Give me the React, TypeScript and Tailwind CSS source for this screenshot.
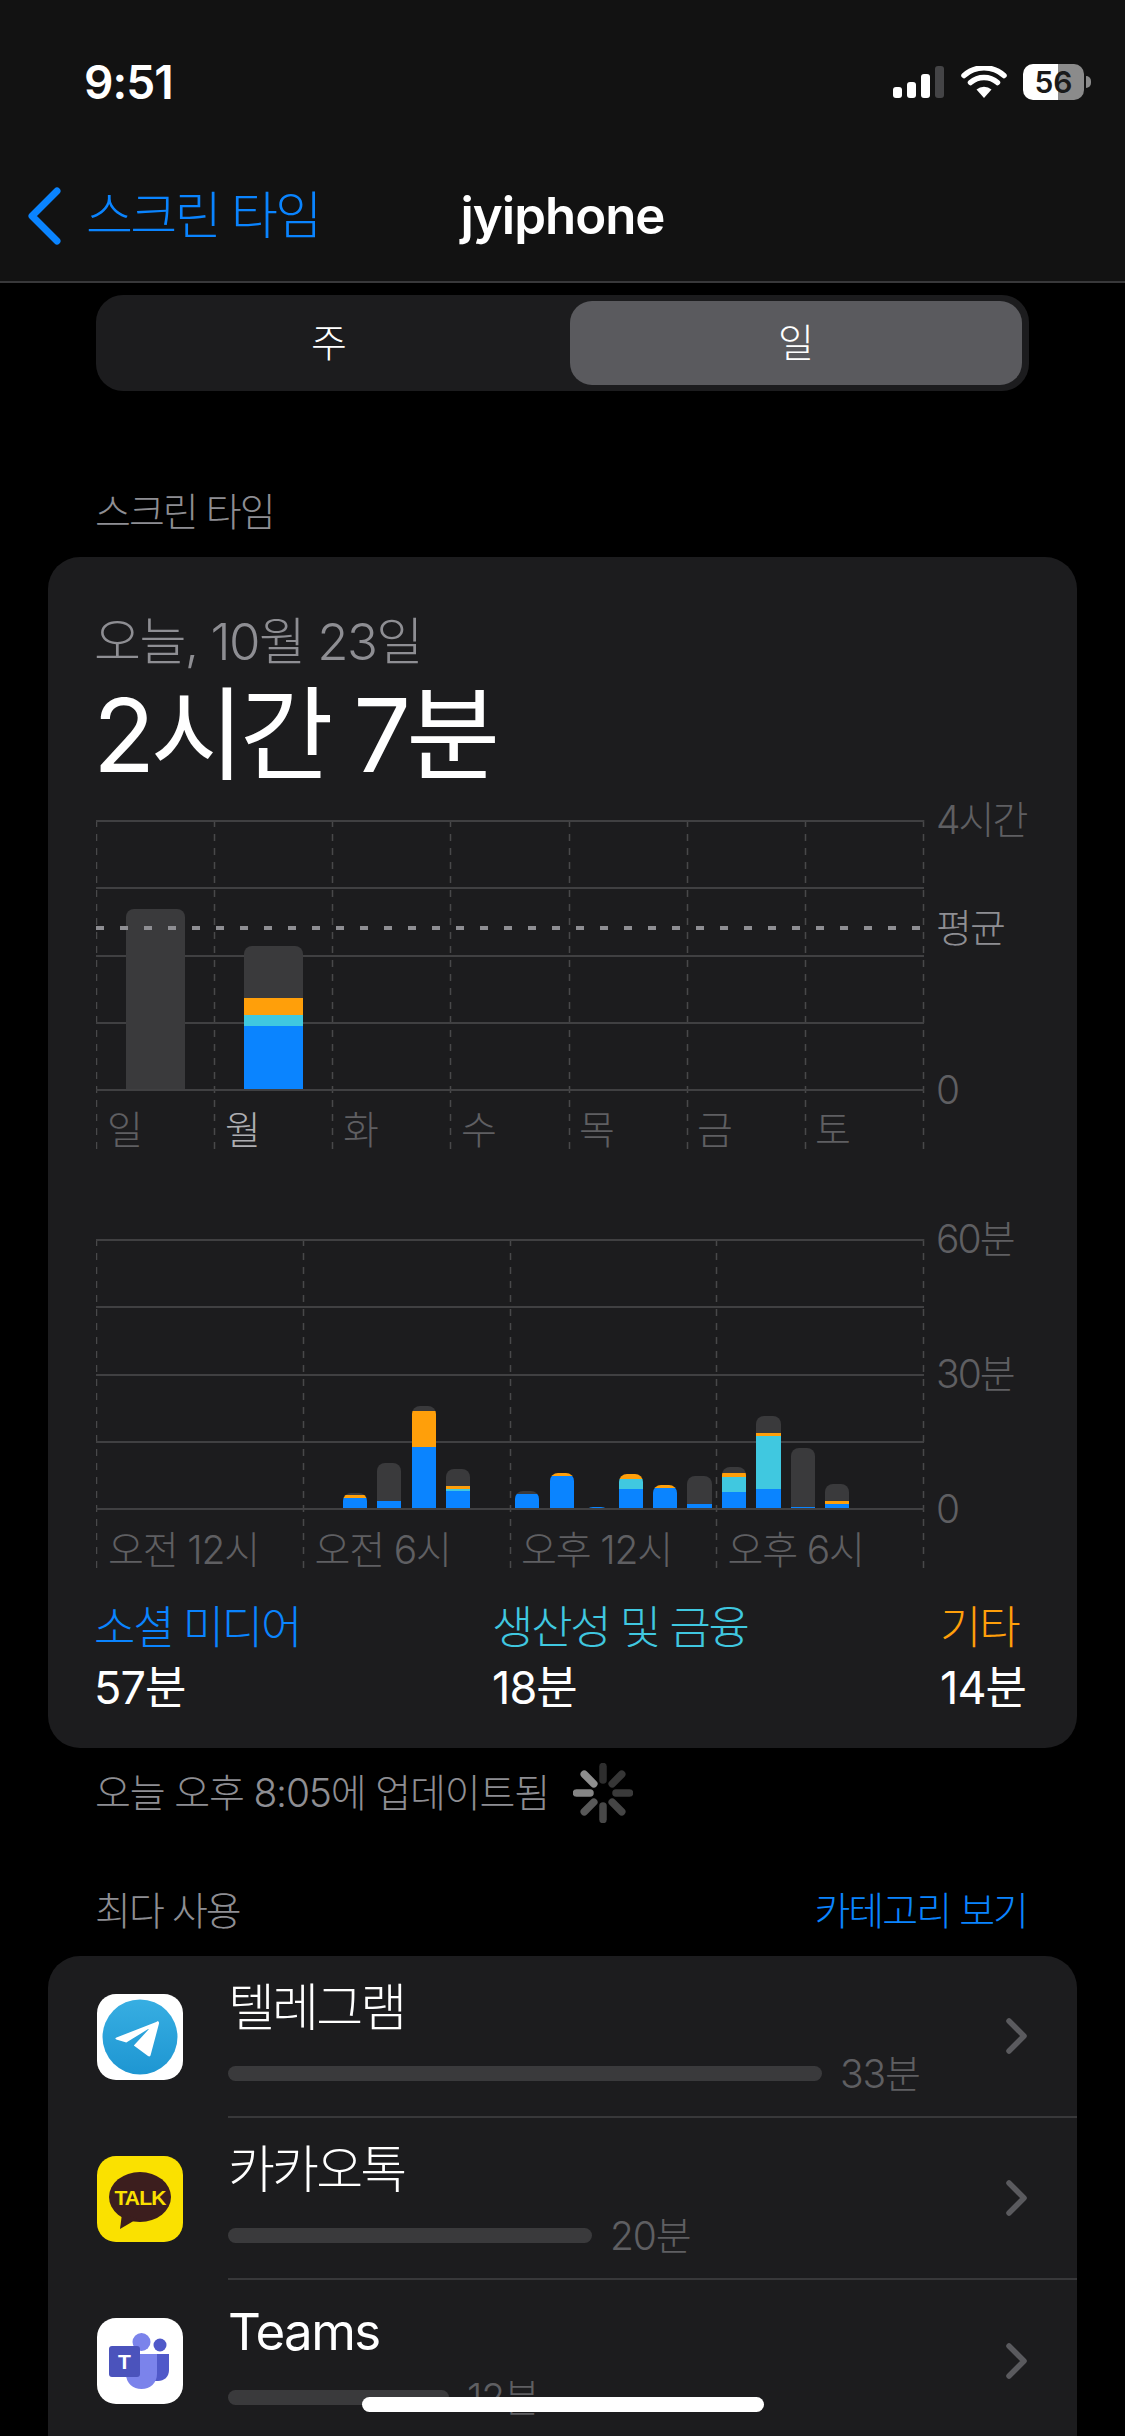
const FONT = "font-['Inter','Noto_Sans_CJK_KR',sans-serif]";

const GRAY = "#3a3a3c";
const BLUE = "#0a84ff";
const CYAN = "#40c8e0";
const ORANGE = "#ff9f0a";
const GRID = "#404042";
const TICK = "#48484a";

type Bar = { x: number; w: number; gray: number; orange: number; cyan: number; blue: number };

const weekBars: Bar[] = [
  { x: 30, w: 59, gray: 181, orange: 0, cyan: 0, blue: 0 },
  { x: 148, w: 59, gray: 52, orange: 17, cyan: 11, blue: 64 },
];

const hourBars: Bar[] = [
  { x: 247, w: 24, gray: 2, orange: 3, cyan: 0, blue: 11 },
  { x: 281, w: 24, gray: 38, orange: 0, cyan: 0, blue: 8 },
  { x: 316, w: 24, gray: 5, orange: 36, cyan: 0, blue: 62 },
  { x: 350, w: 24, gray: 17, orange: 3, cyan: 2, blue: 18 },
  { x: 419, w: 24, gray: 3, orange: 0, cyan: 0, blue: 15 },
  { x: 454, w: 24, gray: 0, orange: 3, cyan: 0, blue: 33 },
  { x: 489, w: 24, gray: 0, orange: 0, cyan: 0, blue: 2 },
  { x: 523, w: 24, gray: 0, orange: 5, cyan: 10, blue: 20 },
  { x: 557, w: 24, gray: 0, orange: 3, cyan: 0, blue: 21 },
  { x: 591, w: 25, gray: 28, orange: 0, cyan: 0, blue: 5 },
  { x: 626, w: 24, gray: 6, orange: 4, cyan: 15, blue: 17 },
  { x: 660, w: 25, gray: 17, orange: 3, cyan: 53, blue: 20 },
  { x: 695, w: 24, gray: 59, orange: 0, cyan: 0, blue: 2 },
  { x: 729, w: 24, gray: 17, orange: 3, cyan: 0, blue: 5 },
];

const BASE = 270;

// stacked bar, the whole stack clipped to one rounded-top shape
function StackedBar({ bar, id }: { bar: Bar; id: string }) {
  const total = bar.gray + bar.orange + bar.cyan + bar.blue;
  let y = BASE - total;
  const segments = [
    { h: bar.gray, fill: GRAY },
    { h: bar.orange, fill: ORANGE },
    { h: bar.cyan, fill: CYAN },
    { h: bar.blue, fill: BLUE },
  ];
  return (
    <g>
      <clipPath id={id}>
        <rect x={bar.x} y={y} width={bar.w} height={total + 12} rx={8} />
      </clipPath>
      <g clipPath={`url(#${id})`}>
        {segments.map((s, i) => {
          const rect = <rect key={i} x={bar.x} y={y} width={bar.w} height={s.h} fill={s.fill} />;
          y += s.h;
          return rect;
        })}
      </g>
    </g>
  );
}

function ChartGrid({ ticks, children }: { ticks: number[]; children?: React.ReactNode }) {
  return (
    <svg width="830" height="330" viewBox="0 0 830 330" className="block">
      {ticks.map((x) => (
        <line key={x} x1={x + 0.5} x2={x + 0.5} y1={0} y2={330} stroke={TICK} strokeWidth="1.5" strokeDasharray="7 7" />
      ))}
      {[1, 68, 136, 203].map((y) => (
        <line key={y} x1={0} x2={828} y1={y} y2={y} stroke={GRID} strokeWidth="2" />
      ))}
      {children}
      <line x1={0} x2={828} y1={BASE} y2={BASE} stroke={GRID} strokeWidth="2" />
    </svg>
  );
}

function AxisLabel({ top, children, className = "text-[#5f5f62]" }: { top: number; children: React.ReactNode; className?: string }) {
  return (
    <span
      style={{ top }}
      className={`absolute left-[840px] h-[50px] -translate-y-1/2 whitespace-nowrap text-[39px] font-light leading-[50px] tracking-[-0.05em] ${className}`}
    >
      {children}
    </span>
  );
}

function WeekChart() {
  const days = ["일", "월", "화", "수", "목", "금", "토"];
  return (
    <div className="relative h-[330px] w-[981px]">
      <ChartGrid ticks={[0, 118, 236, 354, 473, 591, 709, 827]}>
        {weekBars.map((b, i) => (
          <StackedBar key={i} bar={b} id={`week-${i}`} />
        ))}
        <line x1={0} x2={828} y1={108} y2={108} stroke="#8e8e93" strokeWidth="4" strokeDasharray="8 16" />
      </ChartGrid>
      <AxisLabel top={0}>4시간</AxisLabel>
      <AxisLabel top={108} className="text-[#8e8e93]">평균</AxisLabel>
      <AxisLabel top={270}>0</AxisLabel>
      <div className="absolute left-0 top-[285px] grid w-[826px] grid-cols-7">
        {days.map((d, i) => (
          <span key={d} className={`pl-[11px] text-[39px] font-light leading-[50px] ${i === 1 ? "text-[#aeaeb2]" : "text-[#5f5f62]"}`}>
            {d}
          </span>
        ))}
      </div>
    </div>
  );
}

function HourChart() {
  const hours = ["오전 12시", "오전 6시", "오후 12시", "오후 6시"];
  return (
    <div className="relative h-[330px] w-[981px]">
      <ChartGrid ticks={[0, 207, 414, 620, 827]}>
        {hourBars.map((b, i) => (
          <StackedBar key={i} bar={b} id={`hour-${i}`} />
        ))}
      </ChartGrid>
      <AxisLabel top={0}>60분</AxisLabel>
      <AxisLabel top={135}>30분</AxisLabel>
      <AxisLabel top={270}>0</AxisLabel>
      <div className="absolute left-0 top-[286px] grid w-[826px] grid-cols-4">
        {hours.map((h) => (
          <span key={h} className="whitespace-nowrap pl-[12px] text-[39px] font-light leading-[50px] tracking-[-0.03em] text-[#5f5f62]">
            {h}
          </span>
        ))}
      </div>
    </div>
  );
}

function Spinner() {
  const shades = ["#2e2e2e", "#363636", "#3a3a3a", "#454545", "#484848", "#585858", "#858585", "#8e8e8e"];
  return (
    <svg width="60" height="60" viewBox="-30 -30 60 60">
      {shades.map((c, i) => (
        <line key={i} x1={0} y1={-13} x2={0} y2={-26.5} stroke={c} strokeWidth="7.5" strokeLinecap="round" transform={`rotate(${i * 45})`} />
      ))}
    </svg>
  );
}

function TelegramIcon() {
  return (
    <svg width="86" height="86" viewBox="0 0 86 86" className="block">
      <defs>
        <linearGradient id="tg" x1="0" y1="0" x2="0" y2="1">
          <stop offset="0" stopColor="#37aee2" />
          <stop offset="1" stopColor="#1e96d2" />
        </linearGradient>
      </defs>
      <rect width="86" height="86" rx="19" fill="#fff" />
      <circle cx="43" cy="43" r="37.5" fill="url(#tg)" />
      <path d="M60.500 27.500 19.500 43.500c-1.500.6-1.400 1.500-.2 1.900l10 3.100 21.500-13.200c.8-.5 1.100 0 .5.500L36.800 51.500l14.200 10.500c1.300.8 2.400.4 2.700-1.200l8.300-31.200c.4-1.800-.9-3-2.500-2.600Z" fill="#fff" />
    </svg>
  );
}

function KakaoIcon() {
  return (
    <svg width="86" height="86" viewBox="0 0 86 86" className="block">
      <rect width="86" height="86" rx="19" fill="#fae100" />
      <ellipse cx="43" cy="41" rx="31" ry="25" fill="#3c1e1e" />
      <path d="M25 58 23 73 40 63Z" fill="#3c1e1e" />
      <text x="43" y="48.500" textAnchor="middle" fontFamily="Liberation Sans" fontWeight="700" fontSize="21" letterSpacing="-0.8" fill="#fae100">
        TALK
      </text>
    </svg>
  );
}

function TeamsIcon() {
  return (
    <svg width="86" height="86" viewBox="0 0 86 86" className="block">
      <rect width="86" height="86" rx="19" fill="#fff" />
      <circle cx="63" cy="27" r="6.500" fill="#5059c9" />
      <path d="M52 36h20v16c0 7-5 11-11 11h-9Z" fill="#5059c9" />
      <circle cx="44.500" cy="24" r="9" fill="#7b83eb" />
      <path d="M29 36h31v20c0 9-7 15-15.500 15S29 65 29 56Z" fill="#7b83eb" />
      <rect x="12" y="28" width="31" height="31" rx="3" fill="#4b53bc" />
      <text x="27.500" y="50.500" textAnchor="middle" fontFamily="Liberation Sans" fontWeight="700" fontSize="21" fill="#fff">
        T
      </text>
    </svg>
  );
}

function Chevron() {
  return (
    <svg width="21" height="36" viewBox="0 0 21 36" fill="none">
      <path d="M3 3 18 18 3 33" stroke="#5a5a5e" strokeWidth="5.500" strokeLinecap="round" strokeLinejoin="round" />
    </svg>
  );
}

function AppRow({ icon, name, bar, time, last }: { icon: React.ReactNode; name: string; bar: string; time: string; last?: boolean }) {
  return (
    <div className="flex h-[162px]">
      <div className="flex w-[180px] shrink-0 items-center pl-[49px]">{icon}</div>
      <div className={`flex flex-1 items-center justify-between pr-[50px] ${last ? "" : "border-b-2 border-[#38383a]"}`}>
        <div className="self-start pt-[22px]">
          <div className={`h-[60px] text-[51px] leading-[60px] ${last ? "font-normal tracking-[-0.03em]" : "font-light tracking-[-0.055em]"}`}>{name}</div>
          <div className="mt-[28px] flex h-[15px] items-center gap-[18px]">
            <div className={`h-[15px] rounded-full bg-[#3a3a3c] ${bar}`} />
            <span className="text-[39px] font-light leading-[15px] tracking-[-0.03em] text-[#5f5f62]">{time}</span>
          </div>
        </div>
        <Chevron />
      </div>
    </div>
  );
}

export default function App() {
  return (
    <div className={`relative h-[2436px] w-[1125px] overflow-hidden bg-black text-white ${FONT}`}>
      <header className="h-[283px] border-b-2 border-[#38383a] bg-[#121212]">
        <div className="flex h-[164px] items-center justify-between pl-[84px] pr-[34px]">
          <span className="text-[46px] font-semibold leading-none tracking-[-0.02em]">9:51</span>
          <div className="flex items-center">
            <div className="flex h-[32px] items-end gap-[5px]">
              <div className="h-[11px] w-[9px] rounded-[3px] bg-white" />
              <div className="h-[16px] w-[9px] rounded-[3px] bg-white" />
              <div className="h-[24px] w-[9px] rounded-[3px] bg-white" />
              <div className="h-[32px] w-[9px] rounded-[3px] bg-[#444446]" />
            </div>
            <svg width="46" height="32" viewBox="0 0 46 32" fill="none" className="ml-[17px]">
              <path d="M23 32 15.500 23.500a11.500 11.500 0 0 1 15 0Z" fill="#fff" />
              <path d="M9.500 16.500a20.500 20.500 0 0 1 27 0" stroke="#fff" strokeWidth="5.500" strokeLinecap="round" />
              <path d="M3 9.500a30 30 0 0 1 40 0" stroke="#fff" strokeWidth="5.500" strokeLinecap="round" />
            </svg>
            <div className="ml-[16px] flex h-[36px] w-[61px] items-center justify-center rounded-[10px] bg-[linear-gradient(90deg,#fff_57%,#8b8b8b_57%)] text-[30px] font-semibold leading-none text-[#1a1a1a]">
              56
            </div>
            <div className="ml-[2px] h-[12px] w-[5px] rounded-r-full bg-[#8b8b8b]" />
          </div>
        </div>
        <div className="grid h-[104px] grid-cols-[1fr_auto_1fr] items-center">
          <div className="flex items-center pl-[27px]">
            <svg width="34" height="58" viewBox="0 0 34 58" fill="none">
              <path d="M30 4 5 29l25 25" stroke={BLUE} strokeWidth="7" strokeLinecap="round" strokeLinejoin="round" />
            </svg>
            <span className="ml-[25px] text-[51px] font-light leading-[60px] tracking-[-0.05em] text-[#0a84ff]">스크린 타임</span>
          </div>
          <span className="text-[51px] font-semibold leading-[60px] tracking-[-0.02em]">jyiphone</span>
          <div />
        </div>
      </header>

      <div className="ml-[96px] mt-[12px] grid h-[96px] w-[933px] grid-cols-[474px_452px] rounded-[27px] bg-[#1c1c1e] py-[6px]">
        <div className="flex items-center justify-center pr-[8px] text-[39px] font-light">주</div>
        <div className="flex items-center justify-center rounded-[22px] bg-[#5a5a5e] text-[39px] font-light">일</div>
      </div>

      <div className="mt-[97px] flex h-[48px] items-center pl-[95px] text-[39px] font-light tracking-[-0.05em] text-[#8e8e93]">스크린 타임</div>

      <section className="mx-[48px] mt-[21px] h-[1191px] rounded-[32px] bg-[#1c1c1e] pl-[48px] pt-[55px]">
        <div className="ml-[-2px] h-[60px] text-[51px] font-light leading-[60px] tracking-[-0.03em] text-[#8e8e93]">오늘, 10월 23일</div>
        <div className="ml-[-3px] mt-[8px] h-[110px] text-[102px] leading-[110px] tracking-[-0.045em]">2시간 7분</div>
        <div className="mt-[30px]">
          <WeekChart />
        </div>
        <div className="mt-[89px]">
          <HourChart />
        </div>
        <div className="ml-[-2px] mt-[31px] flex">
          <div className="w-[398px]">
            <div className="h-[56px] text-[45px] font-light leading-[56px] tracking-[-0.05em] text-[#0a84ff]">소셜 미디어</div>
            <div className="mt-[4px] h-[56px] text-[45px] leading-[56px] tracking-[-0.02em]">57분</div>
          </div>
          <div className="w-[448px]">
            <div className="h-[56px] text-[45px] font-light leading-[56px] tracking-[-0.05em] text-[#40c8e0]">생산성 및 금융</div>
            <div className="mt-[4px] h-[56px] text-[45px] leading-[56px] tracking-[-0.02em]">18분</div>
          </div>
          <div>
            <div className="h-[56px] text-[45px] font-light leading-[56px] tracking-[-0.05em] text-[#ff9f0a]">기타</div>
            <div className="mt-[4px] h-[56px] text-[45px] leading-[56px] tracking-[-0.02em]">14분</div>
          </div>
        </div>
      </section>

      <div className="mt-[15px] flex h-[60px] items-center pl-[95px]">
        <span className="text-[39px] font-light tracking-[-0.03em] text-[#8e8e93]">오늘 오후 8:05에 업데이트됨</span>
        <div className="ml-[24px]">
          <Spinner />
        </div>
      </div>

      <div className="mt-[63px] flex h-[50px] items-center justify-between pl-[95px] pr-[98px] text-[39px] font-light tracking-[-0.05em]">
        <span className="text-[#8e8e93]">최다 사용</span>
        <span className="text-[#0a84ff]">카테고리 보기</span>
      </div>

      <section className="mx-[48px] mt-[20px] h-[520px] rounded-[32px] bg-[#1c1c1e]">
        <AppRow icon={<TelegramIcon />} name="텔레그램" bar="w-[594px]" time="33분" />
        <AppRow icon={<KakaoIcon />} name="카카오톡" bar="w-[364px]" time="20분" />
        <AppRow icon={<TeamsIcon />} name="Teams" bar="w-[221px]" time="12분" last />
      </section>

      <div className="absolute bottom-[24px] left-[362px] h-[15px] w-[402px] rounded-full bg-white" />
    </div>
  );
}
